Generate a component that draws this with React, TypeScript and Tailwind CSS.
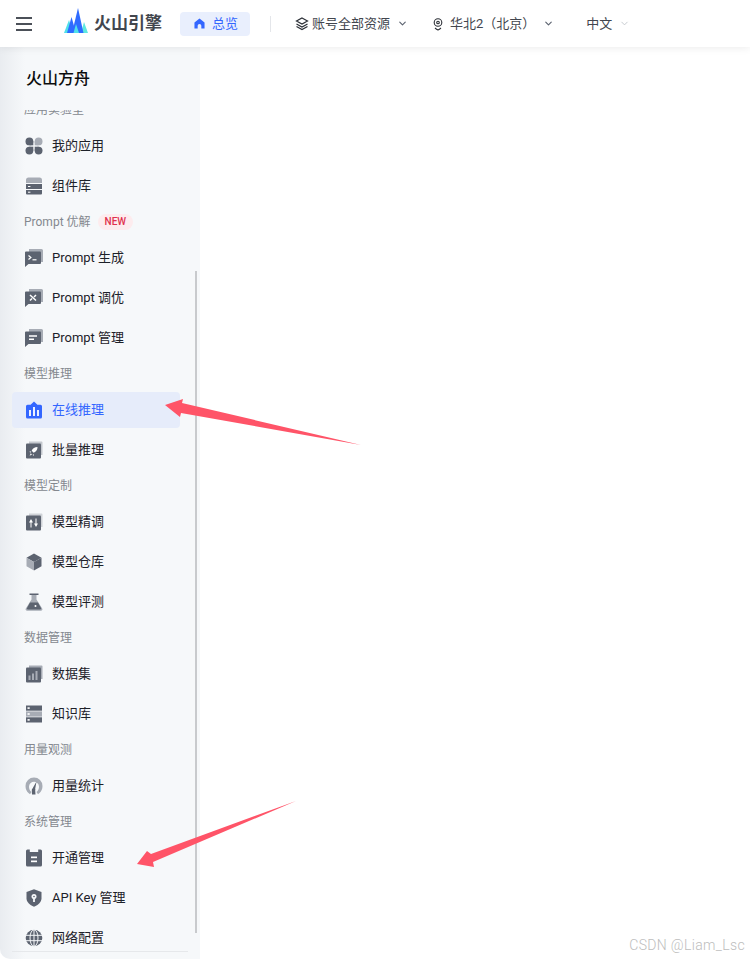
import React from 'react';
import { ChevronDown } from 'lucide-react';

const D = '#5c6370';
const L = '#a7acb5';

type IconProps = { children: React.ReactNode };
const Ico: React.FC<IconProps> = ({ children }) => (
  <svg width="18" height="18" viewBox="0 0 18 18" className="shrink-0">{children}</svg>
);

const Bubble = ({ children }: IconProps) => (
  <>
    <path d="M4 0h12.500A1.500 1.500 0 0 1 18 1.500V13h-2V3H4z" fill={L} />
    <path d="M1 2.500h14a1 1 0 0 1 1 1V14a1 1 0 0 1-1 1H3.500L0 18V3.500a1 1 0 0 1 1-1z" fill={D} />
    {children}
  </>
);

const icons: Record<string, React.ReactNode> = {
  apps: (
    <Ico>
      <circle cx="4.400" cy="4.400" r="3.900" fill={D} />
      <rect x="4.400" y="4.400" width="3.900" height="3.900" fill={D} />
      <circle cx="13.600" cy="4.400" r="3.900" fill={L} />
      <rect x="9.700" y="4.400" width="3.900" height="3.900" fill={L} />
      <circle cx="4.400" cy="13.600" r="3.900" fill={D} />
      <rect x="4.400" y="9.700" width="3.900" height="3.900" fill={D} />
      <circle cx="13.600" cy="13.600" r="3.900" fill={D} />
      <rect x="9.700" y="9.700" width="3.900" height="3.900" fill={D} />
    </Ico>
  ),
  comp: (
    <Ico>
      <path d="M3.500.5h11A2.500 2.500 0 0 1 17 3v3H1V3A2.500 2.500 0 0 1 3.500.5z" fill={L} />
      <rect x="1" y="7" width="16" height="5" fill={D} />
      <path d="M1 13h16v3.500a1 1 0 0 1-1 1H2a1 1 0 0 1-1-1z" fill={D} />
      <rect x="3" y="9" width="2.400" height="1" fill="#fff" />
      <rect x="3" y="14.700" width="2.400" height="1" fill="#fff" />
    </Ico>
  ),
  gen: (
    <Ico>
      <Bubble>
        <path d="M3.500 6.500l2.400 2-2.400 2" stroke="#fff" strokeWidth="1.200" fill="none" />
        <path d="M7.500 10.800h4" stroke="#fff" strokeWidth="1.200" />
      </Bubble>
    </Ico>
  ),
  tune: (
    <Ico>
      <Bubble>
        <path d="M5 6l6 5.500M11 6L9 8M7 9.500l-2 2" stroke="#fff" strokeWidth="1.500" fill="none" />
      </Bubble>
    </Ico>
  ),
  manage: (
    <Ico>
      <Bubble>
        <path d="M4 7h8M4 10.300h5" stroke="#fff" strokeWidth="1.400" />
      </Bubble>
    </Ico>
  ),
  online: (
    <Ico>
      <path d="M9 .5l3.400 3.300H15.500A1.500 1.500 0 0 1 17 5.300V16a1.500 1.500 0 0 1-1.500 1.500h-13A1.500 1.500 0 0 1 1 16V5.300a1.500 1.500 0 0 1 1.500-1.500h3.100z" fill="#3366ff" />
      <path d="M5 9v6M9 6v9M13 9v6" stroke="#fff" strokeWidth="1.800" />
    </Ico>
  ),
  batch: (
    <Ico>
      <path d="M4 .500h12.500a1 1 0 0 1 1 1V14h-2V3H4z" fill="#c4c8ce" />
      <rect x="1" y="2.500" width="15" height="15" rx="1" fill={D} />
      <path d="M12.500 6c-2.800 0-4.700 1.300-5.800 3.700l2 2C11.200 10.700 12.500 8.800 12.500 6zM6.300 10.300l-2 .4 1.300 1zM9 13.200l-.4 1.800-1-1.300zM5.800 12.300L4.600 14.700l2.400-1.200z" fill="#fff" />
    </Ico>
  ),
  tuneModel: (
    <Ico>
      <path d="M4 .500h12.500a1 1 0 0 1 1 1V14h-2V3H4z" fill="#d0d3d8" />
      <rect x="1" y="2.500" width="15" height="15" rx="1" fill={D} />
      <path d="M6 9v5.500M11 5.500V11" stroke="#fff" strokeWidth="1" />
      <path d="M4 9.500L6 6l2 3.500zM9 10.500L11 14l2-3.500z" fill="#fff" />
    </Ico>
  ),
  cube: (
    <Ico>
      <path d="M9 .5l7.500 4.200L9 9 1.500 4.700z" fill={D} />
      <path d="M9 9l7.500-4.300v8.600L9 17.500z" fill={D} />
      <path d="M1.500 4.700L9 9v8.500l-7.500-4.200z" fill={L} />
    </Ico>
  ),
  flask: (
    <Ico>
      <rect x="4.500" y=".5" width="9" height="1.500" fill={D} />
      <path d="M6.500 2h5v4.500l5.700 9a1.500 1.500 0 0 1-1.300 2.300H2.100A1.500 1.500 0 0 1 .8 15.500l5.700-9z" fill={L} />
      <path d="M5 9.500h8l3 5.500a1 1 0 0 1-1 1.500H3A1 1 0 0 1 2 15z" fill={D} />
      <circle cx="10.500" cy="13" r="1" fill="#fff" />
    </Ico>
  ),
  dataset: (
    <Ico>
      <path d="M4 .500h12.500a1 1 0 0 1 1 1V14h-2V3H4z" fill={L} />
      <rect x="1" y="2.500" width="15" height="15" rx="1" fill={D} />
      <rect x="3.500" y="10.500" width="2" height="4.500" fill={L} />
      <rect x="7" y="8.500" width="2" height="6.500" fill={L} />
      <rect x="10.500" y="6" width="2" height="9" fill={L} />
    </Ico>
  ),
  kb: (
    <Ico>
      <rect x="1" y=".5" width="16" height="5.200" fill={D} />
      <rect x="1" y="6.400" width="16" height="5.200" fill={L} />
      <rect x="1" y="12.300" width="16" height="5.200" fill={D} />
      <rect x="2.500" y="2.300" width="2.200" height="1.600" fill="#fff" />
      <rect x="2.500" y="8.200" width="2.200" height="1.600" fill="#fff" />
      <rect x="2.500" y="14.100" width="2.200" height="1.600" fill="#fff" />
    </Ico>
  ),
  usage: (
    <Ico>
      <path d="M9 .5A8.500 8.500 0 0 0 .5 9c0 3 1.200 5.400 3 7l1.500 1.300 1.500-2.300C4.900 13.700 4 11.800 4 9.700a5 5 0 0 1 10 0c0 2.100-.9 4-2.500 5.300l1.500 2.300 1.500-1.300c1.800-1.600 3-4 3-7A8.500 8.500 0 0 0 9 .5z" fill={L} />
      <path d="M11.500 4.500L7.500 11.500a2.200 2.200 0 0 0-.7 2L7 17.500h3.500l-.3-4a2.200 2.200 0 0 0 0-1.700z" fill={D} />
    </Ico>
  ),
  open: (
    <Ico>
      <path d="M2.500.5h2.300V3h8.400V.5h2.300A1.500 1.500 0 0 1 17 2v14a1.500 1.500 0 0 1-1.500 1.500h-13A1.500 1.500 0 0 1 1 16V2A1.500 1.500 0 0 1 2.500.5z" fill={D} />
      <rect x="6" y="7.500" width="6" height="1.700" fill="#fff" />
      <rect x="6" y="11.500" width="6" height="1.700" fill="#fff" />
    </Ico>
  ),
  key: (
    <Ico>
      <path d="M9 .3l7.500 2.700v6.300c0 3.700-3.100 6.800-7.500 8.400-4.400-1.600-7.500-4.700-7.500-8.400V3z" fill={D} />
      <circle cx="9" cy="7.500" r="2.500" fill="#f6f8fa" />
      <rect x="8.100" y="9" width="1.800" height="4" fill="#f6f8fa" />
      <circle cx="9" cy="7.500" r=".8" fill={D} />
    </Ico>
  ),
  globe: (
    <Ico>
      <circle cx="9" cy="9" r="8.300" fill={D} />
      <path d="M.7 6.300h16.600M.7 11.700h16.600M9 .7v16.600" stroke="#f6f8fa" strokeWidth="1" />
      <ellipse cx="9" cy="9" rx="4" ry="8.300" fill="none" stroke="#f6f8fa" strokeWidth="1" />
    </Ico>
  ),
};

const Row = ({ icon, label, active }: { icon: string; label: string; active?: boolean }) => (
  <div className="h-10 flex items-center">
    <div className={`w-[168px] h-9 ml-3 pl-[13px] rounded flex items-center gap-[9px] text-[13px] ${active ? 'bg-[#e6ecfa] text-[#3366ff]' : 'text-[#1d2129]'}`}>
      {icons[icon]}
      <span>{label}</span>
    </div>
  </div>
);

const Label = ({ children }: IconProps) => (
  <div className="h-8 pl-6 flex items-center gap-[7px] text-xs text-[#84888f]">{children}</div>
);

const App: React.FC = () => {
  return (
    <div
      className="relative w-[750px] h-[959px] bg-white overflow-hidden flex flex-col"
      style={{ fontFamily: 'Roboto, "Noto Sans CJK SC", sans-serif' }}
    >
      <header className="h-[47px] shrink-0 bg-white shadow-[0_1px_8px_rgba(0,0,0,0.08)] relative z-10 flex items-center text-[13px] text-[#42464e]">
        <div className="ml-4 w-4 h-[14px] flex flex-col justify-between">
          <i className="block h-0.5 bg-[#4b5058]" />
          <i className="block h-0.5 bg-[#4b5058]" />
          <i className="block h-0.5 bg-[#4b5058]" />
        </div>
        <svg width="24" height="25" viewBox="0 0 24 25" className="ml-[32px] mb-[6px] shrink-0">
          <path d="M0 25l5-13 4 13z" fill="#4fe0ea" />
          <path d="M17 25l3-11 4 11z" fill="#5ee8e0" />
          <path d="M3 25L7.500 9 12 25z" fill="#2f6bff" />
          <path d="M8 25L14 0l5.500 25z" fill="#2f6bff" />
          <path d="M9.500 25l2.500-9 3 9z" fill="#4fe0ea" />
        </svg>
        <span className="ml-1.5 text-[17px] font-bold text-[#42464e]">火山引擎</span>
        <div className="ml-[18px] w-[70px] h-6 rounded bg-[#e9effd] text-[#3366ff] flex items-center pl-[14px] gap-[7px]">
          <svg width="11" height="11" viewBox="0 0 12 12"><path d="M6 .5l5.500 4.500v6.500H8V8.500a2 2 0 0 0-4 0v3H.5V5z" fill="#3366ff" /></svg>
          <span>总览</span>
        </div>
        <i className="block ml-5 w-px h-4 bg-[#e4e6ea]" />
        <svg width="14" height="14" viewBox="0 0 14 14" fill="none" stroke="#2b2f36" strokeWidth="1.200" className="ml-[24px]">
          <path d="M7 1l5.500 3L7 7 1.500 4z" />
          <path d="M1.500 7L7 10l5.500-3M1.500 9.500L7 12.500l5.500-3" />
        </svg>
        <span className="ml-[3px]">账号全部资源</span>
        <ChevronDown size={11} strokeWidth={2.5} className="ml-[7px] text-[#5c6370]" />
        <svg width="12" height="14" viewBox="0 0 12 14" fill="none" stroke="#2b2f36" strokeWidth="1.100" className="ml-[24px]">
          <circle cx="6" cy="5.500" r="3.800" />
          <circle cx="6" cy="5.500" r="1.300" />
          <path d="M3 11c1 .8 2 1.500 3 2 1-.5 2-1.200 3-2" />
        </svg>
        <span className="ml-[6px]">华北2（北京）</span>
        <ChevronDown size={11} strokeWidth={2.5} className="ml-[8px] text-[#5c6370]" />
        <span className="ml-[32px]">中文</span>
        <ChevronDown size={11} strokeWidth={2} className="ml-[7px] text-[#c2c6cc]" />
      </header>

      <aside className="relative w-[200px] flex-1 min-h-0 flex flex-col rounded-bl-[10px] overflow-hidden bg-[linear-gradient(90deg,#e9ecf0_0px,#f6f8fa_25px)]">
        <div className="h-[63px] shrink-0 pl-[26px] pt-[19px] text-base font-medium leading-[26px] text-[#0c0d0e]">火山方舟</div>
        <nav className="flex-1 min-h-0 overflow-hidden">
          <div className="-mt-[16px]">
            <Label>应用实验室</Label>
            <Row icon="apps" label="我的应用" />
            <Row icon="comp" label="组件库" />
            <Label>
              Prompt 优解
              <span className="h-4 px-[7px] rounded-full bg-[#fdecee] text-[#e0324e] text-[10px] font-medium flex items-center">NEW</span>
            </Label>
            <Row icon="gen" label="Prompt 生成" />
            <Row icon="tune" label="Prompt 调优" />
            <Row icon="manage" label="Prompt 管理" />
            <Label>模型推理</Label>
            <Row icon="online" label="在线推理" active />
            <Row icon="batch" label="批量推理" />
            <Label>模型定制</Label>
            <Row icon="tuneModel" label="模型精调" />
            <Row icon="cube" label="模型仓库" />
            <Row icon="flask" label="模型评测" />
            <Label>数据管理</Label>
            <Row icon="dataset" label="数据集" />
            <Row icon="kb" label="知识库" />
            <Label>用量观测</Label>
            <Row icon="usage" label="用量统计" />
            <Label>系统管理</Label>
            <Row icon="open" label="开通管理" />
            <Row icon="key" label="API Key 管理" />
            <Row icon="globe" label="网络配置" />
          </div>
        </nav>
        <div className="h-2 shrink-0 mx-3 border-t border-[#e6e8eb]" />
        <div className="absolute left-[195px] top-[224px] w-0.5 h-[662px] bg-[#c8cacd]" />
      </aside>

      {/* annotation arrows drawn over the screenshot */}
      <svg className="absolute left-0 top-0 z-20 pointer-events-none" width="750" height="959">
        <path d="M165 405L183 399 182 403 361 445 181 413 180 417z" fill="#ff5468" />
        <path d="M137 864L147 851 151 854 296 801 153 862 154 867z" fill="#ff5468" />
      </svg>
      <div className="absolute right-[5px] bottom-[4px] text-sm font-light tracking-[0.35px] text-[#bdbdbd]">CSDN @Liam_Lsc</div>
    </div>
  );
};

export default App;
